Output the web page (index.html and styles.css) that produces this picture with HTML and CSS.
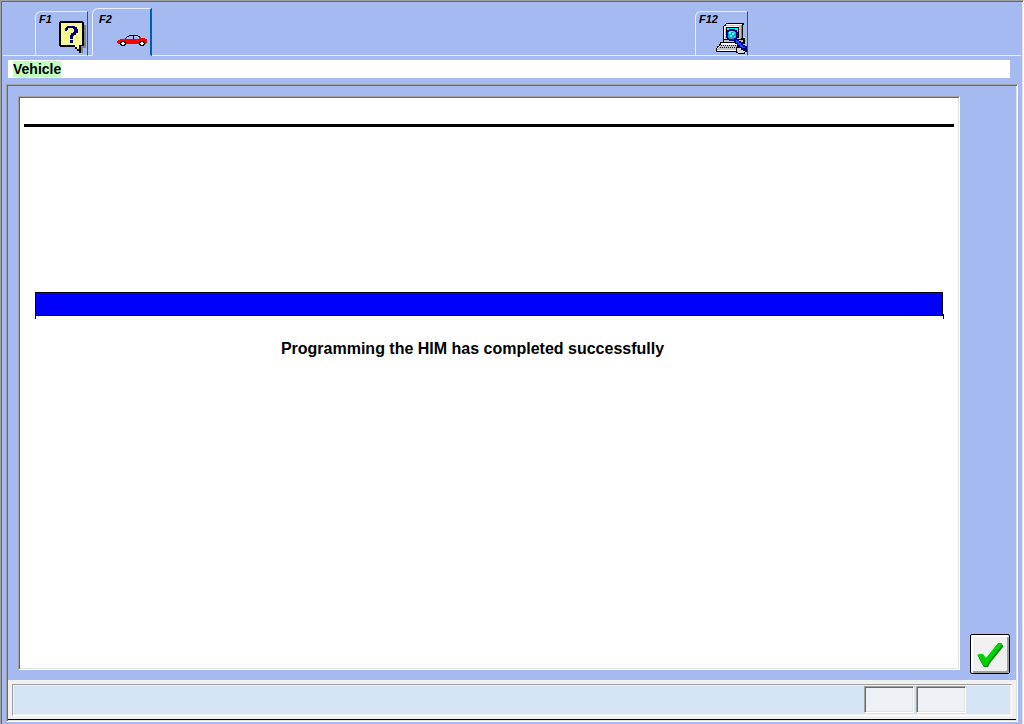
FILE: index.html
```
<!DOCTYPE html>
<html lang="en">
<head>
<meta charset="utf-8">
<title>Vehicle</title>
<link rel="stylesheet" href="styles.css">
</head>
<body>
<div class="window">
  <nav class="tabs" aria-label="Functions">
    <button class="tab" type="button" aria-label="F1 Help">
      <span class="key">F1</span>
      <svg class="icon" width="28" height="33" viewBox="0 0 28 33" aria-hidden="true">
        <path fill="#808080" d="M3 4h24v23h-3v5h-3v-4h-3v-2H3z"/>
        <path fill="#000" d="M1 0h23v1h1v24h-3v7h-2v-2h-2v-2h-2v-2H1v-1H0V1h1z"/>
        <path fill="#ffff20" d="M2 2h21v22h-3v4h-2v-2h-2v-2H2z"/>
        <path stroke="#ffff98" stroke-dasharray="1 1" d="M2 2.500h21M3 3.500h20M2 4.500h21M3 5.500h20M2 6.500h21M3 7.500h20M2 8.500h21M3 9.500h20M2 10.500h21M3 11.500h20M2 12.500h21M3 13.500h20M2 14.500h21M3 15.500h20M2 16.500h21M3 17.500h20M2 18.500h21M3 19.500h20M2 20.500h21M3 21.500h20M2 22.500h21M3 23.500h20M16 24.500h4M17 25.500h3"/>
        <path fill="#000080" d="M8 5h8v1h2v2h1v4h-2v2h-2v1h-1v3h-3v-4h1v-2h2v-1h1V8h-1V7H9v2H8v1H6V7h1V6h1zM11 19h3v3h-3z"/>
      </svg>
    </button>
    <button class="tab tab-active" type="button" aria-label="F2 Vehicle">
      <span class="key">F2</span>
      <svg class="icon" width="30" height="12" viewBox="0 0 30 12" shape-rendering="crispEdges" aria-hidden="true">
        <path fill="#000" d="M12 0h9v1h2v1h1v2H8V3h1V2h1V1h2z"/>
        <path fill="#a6baf2" d="M12 1h4v3H9V3h1V2h2zM17 1h4v1h1v2h-5z"/>
        <path fill="#f00" d="M22 2h2v1h4v1h2v4h-1v1H1V8H0V6h1V5h2V4h19z"/>
        <path fill="#000" d="M4 6h4v1h1v3H8v1H4v-1H3V7h1zM23 6h4v1h1v3h-1v1h-4v-1h-1V7h1z"/>
        <path fill="#fff" d="M5 7h2v1h1v1H7v1H5V9H4V8h1zM24 7h2v1h1v1h-1v1h-2V9h-1V8h1z"/>
      </svg>
    </button>
    <button class="tab tab-far" type="button" aria-label="F12 Diagnosis">
      <span class="key">F12</span>
      <svg class="icon" width="32" height="31" viewBox="0 0 32 31" shape-rendering="crispEdges" aria-hidden="true">
        <path fill="#000" d="M10 0h18v2h-1v13h2v6H5v-2h2V3h1V2h1V1h1z"/>
        <path fill="#c0c0c0" d="M10 2h15v14H8V4h1V3h1z"/>
        <path fill="#fff" d="M10 1h16v1H10zM8 3h15v1H8zM8 4h1v12H8z"/>
        <path fill="#808080" d="M25 2h1v13h-1z"/>
        <path fill="#000" d="M10 4h13v11H10z"/>
        <path fill="#0ff" d="M11 5h11v10H11z"/>
        <path fill="#c0c0c0" d="M8 17h19v2H8z"/>
        <path fill="#000" d="M4 19h22v3h-1v3h-1v4H0v-4h1v-2h2v-2h1z"/>
        <path fill="#fff" d="M5 20h19v2H4v2H2v3H1v1h21v-1H1v-2h2v-2h2z"/>
        <path fill="#c0c0c0" d="M4 22h19v3h-1v2H1v-1h1v-2h2z"/>
        <path stroke="#000" stroke-dasharray="1 1" d="M5 22.500h17M4 24.500h17"/>
        <path fill="#000" d="M21 23h5v1h3v2h2v3h-2v2h-7v-1h-2v-5h1z"/>
        <path fill="#d8d8d8" d="M21 25h4v1h4v3h-1v1h-6v-1h-1z"/>
        <path fill="#000080" d="M13 6h6v1h2v2h1v6h-1v2h-2v1h-6v-1h-2v-2h-1V9h1V7h2z"/>
        <path fill="#00b0d0" d="M13 8h6v1h1v6h-1v1h-6v-1h-1V9h1z"/>
        <path fill="#60f0f0" d="M14 8h3v1h-3zM13 9h2v2h-2zM16 10h2v2h-2zM14 12h2v2h-2zM18 9h1v1h-1zM18 13h1v1h-1z"/>
        <path fill="#fff" d="M13 9h1v1h-1zM17 10h1v1h-1z"/>
        <path fill="#000080" d="M18 15h3v1h2v2h2v2h2v2h2v1h2v4h-1v1h-3v-1h-2v-2h-2v-2h-2v-2h-2v-2h-1z"/>
        <path fill="#1848ff" d="M20 17h1v1h2v2h2v2h2v2h2v1h-3v-1h-2v-2h-2v-2h-2z"/>
      </svg>
    </button>
  </nav>
  <header class="title"><h1 class="title-text">Vehicle</h1></header>
  <main class="frame">
    <div class="work">
      <section class="page">
        <hr class="rule">
        <div class="progress" role="progressbar" aria-label="Programming" aria-valuenow="100" aria-valuemin="0" aria-valuemax="100"><div class="bar"></div></div>
        <p class="message">Programming the HIM has completed successfully</p>
      </section>
      <button class="ok" type="button" aria-label="OK">
        <svg width="26" height="24" viewBox="0 0 26 24" aria-hidden="true">
          <path fill="#008000" d="M1 13l5 0 4 3L22 2l4 0v2L13 20l-2 4H7l-2-3z"/>
          <path fill="#00d400" d="M0 12l2-1h4l3 4L21 0h4v2L12 19l-2 4H7l-2-3-2-5z"/>
        </svg>
      </button>
    </div>
    <footer class="status">
      <div class="status-inner">
        <div class="cell"></div>
        <div class="cell"></div>
      </div>
    </footer>
  </main>
</div>
</body>
</html>
```
FILE: styles.css
```
* {
  box-sizing: border-box;
}

body {
  margin: 0;
  font-family: "Liberation Sans", Arial, sans-serif;
  color: #000;
}

.window {
  display: flex;
  flex-direction: column;
  min-height: 100vh;
  padding-bottom: 2px;
  background: #a6baf2;
  border-top: 1px solid #a0a0a0;
  border-left: 1px solid #a0a0a0;
  border-right: 1px solid #fff;
  box-shadow: inset 1px 1px #696969, inset -1px 0 #e3e3e3;
}

.tabs {
  display: flex;
  align-items: flex-end;
  gap: 4px;
  height: 55px;
  margin: 0 2px;
  padding-left: 32px;
  box-shadow: inset 0 -1px #e8effc;
}

.tab {
  position: relative;
  width: 53px;
  height: 45px;
  padding: 0;
  font: italic bold 11px "Liberation Sans", Arial, sans-serif;
  color: #000;
  background: #a6baf2;
  border: 1px solid #e8effc;
  border-right-color: #0060b0;
  border-top-left-radius: 6px;
}

.tab-active {
  width: 60px;
  height: 48px;
  border-right-width: 2px;
  border-bottom-color: #a6baf2;
}

.tab-far {
  margin-left: auto;
  margin-right: 273px;
}

.key {
  position: absolute;
  top: 1px;
  left: 3px;
}

.tab-active .key {
  top: 4px;
  left: 6px;
}

.icon {
  position: absolute;
  right: 0;
  bottom: 1px;
}

.tab-active .icon {
  right: 3px;
  bottom: 8px;
}

.tab-far .icon {
  right: -1px;
}

.title {
  display: flex;
  height: 18px;
  margin: 4px 13px 6px 7px;
  padding: 1px 5px;
  background: #fff;
}

.title-text {
  margin: 0;
  font-size: 14px;
  line-height: 16px;
  background: #c0ffc0;
}

.frame {
  flex: 1;
  display: flex;
  flex-direction: column;
  margin: 0 5px;
  border: 1px solid;
  border-color: #a0a0a0 #fff #fff #a0a0a0;
  box-shadow: inset 1px 1px #696969, inset -1px -1px #e3e3e3;
  padding: 1px;
}

.work {
  flex: 1;
  display: flex;
  align-items: flex-end;
  gap: 10px;
  padding: 10px 6px 6px 10px;
}

.page {
  flex: 1;
  align-self: stretch;
  margin-bottom: 4px;
  padding: 27px 5px 0;
  background: #fff;
  border: 1px solid;
  border-color: #a0a0a0 #fff #fff #a0a0a0;
  box-shadow: inset 1px 1px #696969, inset -1px -1px #e3e3e3;
}

.rule {
  height: 3px;
  margin: 0;
  background: #000;
  border: 0;
}

.progress {
  margin: 165px 10px 0 11px;
  padding-bottom: 3px;
  border-left: 1px solid #000;
  background: linear-gradient(#000, #000) right bottom / 1px 5px no-repeat;
}

.bar {
  height: 24px;
  margin-right: 1px;
  background: #00f;
  border: 1px solid #000;
  border-left: 0;
}

.message {
  margin: 20px 33px 0 0;
  font-size: 16px;
  font-weight: bold;
  line-height: 20px;
  text-align: center;
}

.ok {
  display: flex;
  align-items: center;
  justify-content: center;
  width: 40px;
  height: 40px;
  padding: 2px 0 0;
  background: #f0f0f0;
  border: 1px solid #000;
  border-radius: 2px;
  box-shadow: inset 2px 2px #fff, inset -2px -2px #a0a0a0;
}

.status {
  padding: 4px 4px 3px;
  background: #f0f0f0;
  border-bottom: 1px solid #000;
}

.status-inner {
  display: flex;
  justify-content: flex-end;
  gap: 2px;
  height: 32px;
  padding: 1px 45px 2px 2px;
  background: #d5e4f5;
  border: 1px solid;
  border-color: #a0a0a0 #fff #fff #a0a0a0;
  box-shadow: inset 1px 1px #f0f0f0, inset -1px -1px #f0f0f0;
}

.cell {
  width: 50px;
  height: 27px;
  background: #edf0f5;
  border: 1px solid;
  border-color: #a0a0a0 #fff #fff #a0a0a0;
  box-shadow: inset 1px 1px #696969, inset -1px -1px #e3e3e3;
}
```
